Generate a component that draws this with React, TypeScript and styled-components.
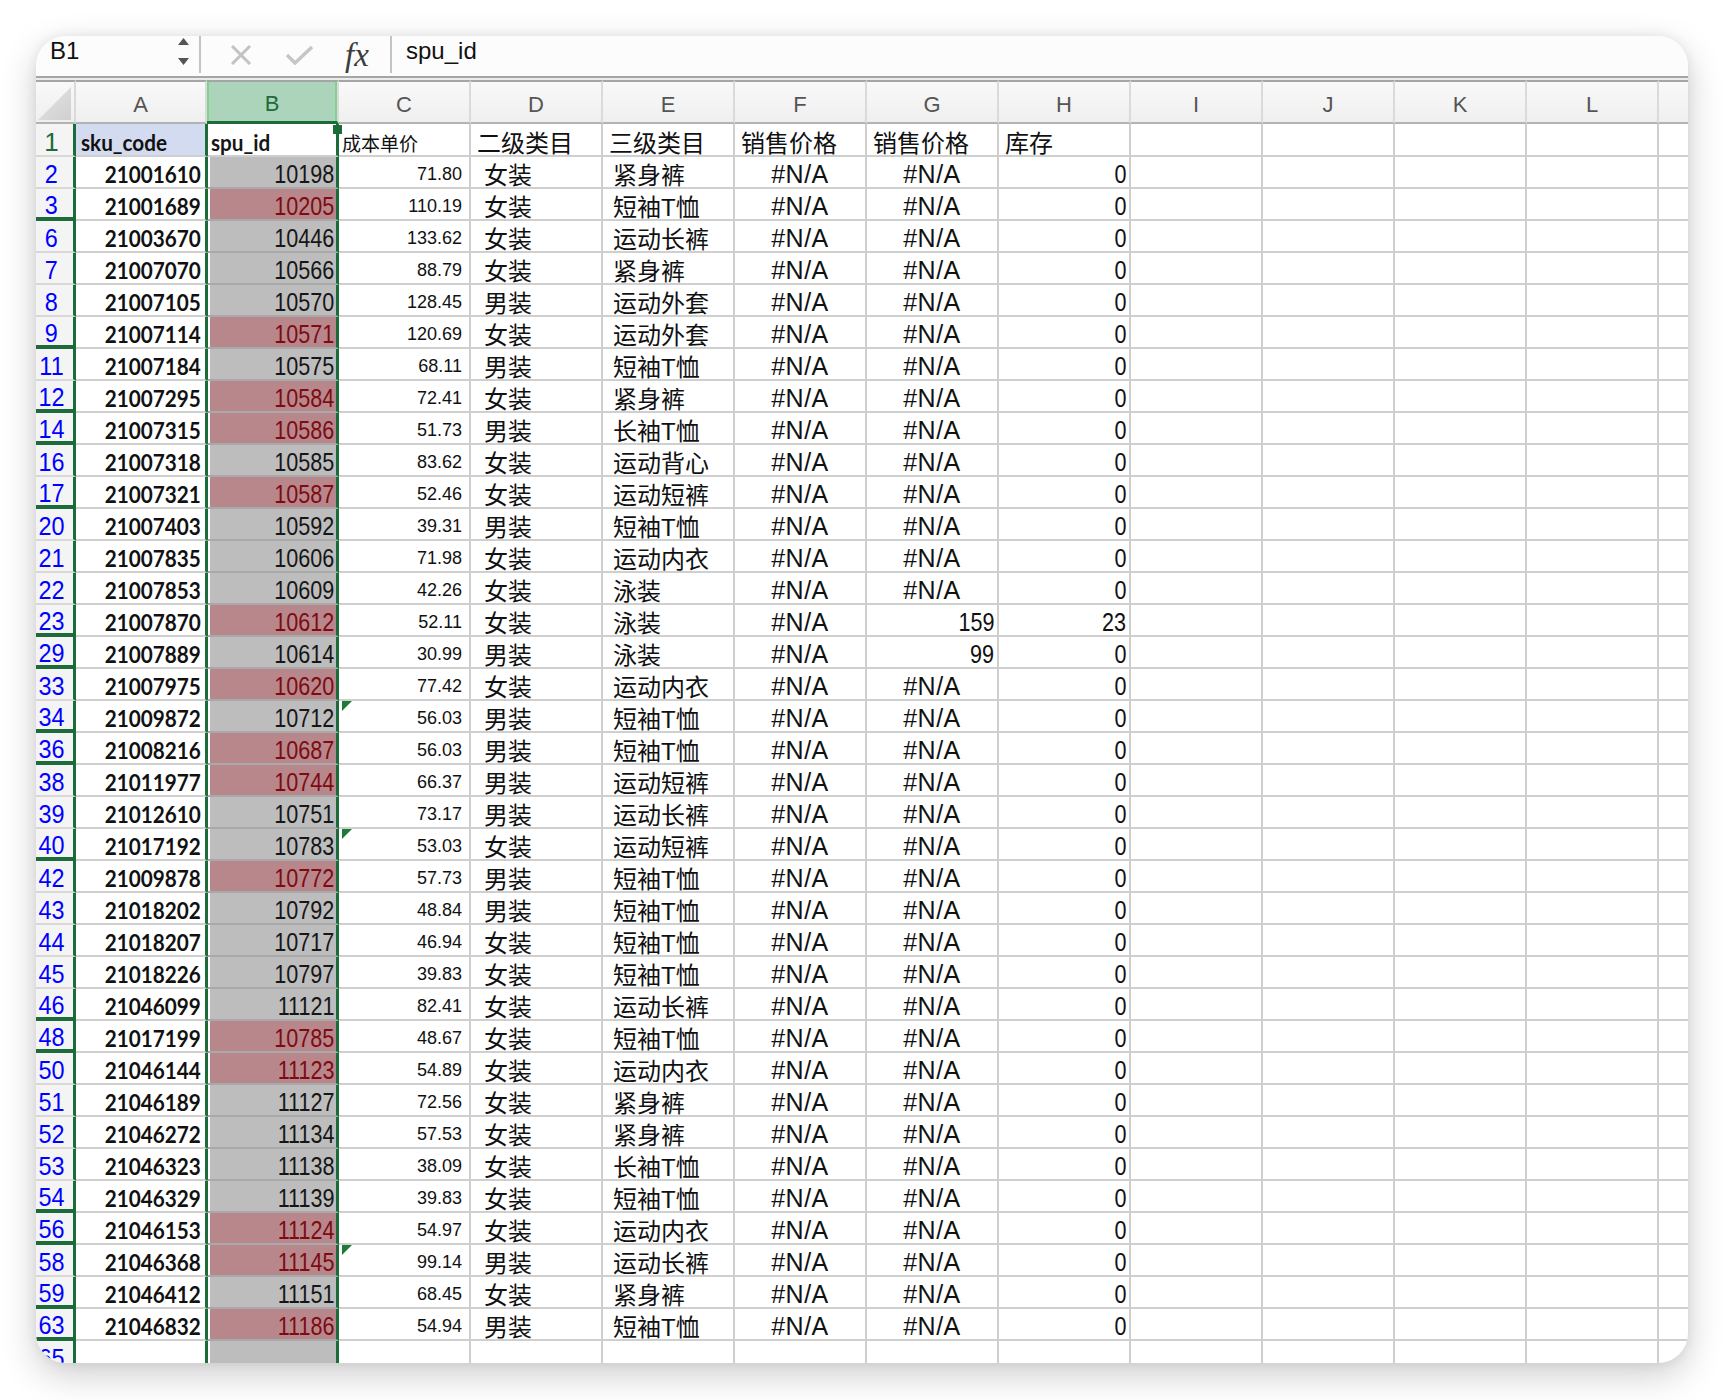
import React from "react";
import styled, { createGlobalStyle } from "styled-components";

const GREEN = "#1d6b3a";
const GRID = "#cfcfcf";
const LATIN = `"Liberation Sans", Arial, "Noto Sans CJK SC", sans-serif`;
const CJK = `"Liberation Sans", "Noto Sans CJK SC", sans-serif`;
const BOLD = `Lato, "Liberation Sans", sans-serif`;

const GlobalStyle = createGlobalStyle`
  * { box-sizing: border-box; }
  html, body { margin: 0; padding: 0; background: #fff; }
  body { font-family: ${LATIN}; }
`;

const Page = styled.div`
  width: 1724px;
  height: 1400px;
  padding: 36px 0 0 36px;
  background: #fff;
`;

const Window = styled.div`
  width: 1652px;
  height: 1327px;
  border-radius: 30px;
  overflow: hidden;
  background: #fff;
  box-shadow: 0 12px 36px rgba(0, 0, 0, 0.2), 0 0 12px rgba(0, 0, 0, 0.07);
  display: flex;
  flex-direction: column;
`;

const FormulaBar = styled.div`
  height: 42px;
  flex: none;
  display: flex;
  align-items: center;
  padding-bottom: 10px;
  background: #fcfcfc;
  border-bottom: 2px solid #a5a5a5;
  color: #111;
  font-size: 24px;
`;

const NameBox = styled.div`
  width: 141px;
  padding-left: 14px;
`;

const Spinner = styled.svg`
  width: 16px;
  height: 30px;
  align-self: flex-start;
  margin-top: 1px;
`;

const BarDivider = styled.div<{ $ml: number }>`
  width: 2px;
  height: 37px;
  align-self: flex-start;
  margin-left: ${(p) => p.$ml}px;
  background: #c4c4c4;
`;

const BarIcon = styled.svg<{ $ml: number }>`
  margin-left: ${(p) => p.$ml}px;
  margin-top: 8px;
  flex: none;
`;

const Fx = styled.span`
  margin-left: 31px;
  width: 30px;
  margin-top: 8px;
  font-family: "Liberation Serif", "DejaVu Serif", serif;
  font-style: italic;
  font-size: 33px;
  color: #3c3c3c;
`;

const FormulaText = styled.span`
  margin-left: 14px;
`;

const GapLine = styled.div`
  height: 2px;
  flex: none;
  background: #ececec;
`;

const Sheet = styled.div`
  display: grid;
  grid-template-columns: 40px 131px repeat(11, 132px) 1fr;
  grid-template-rows: 44px 33px;
  grid-auto-rows: 32px;
`;

/* Excel on the Mac draws its cell text tall and narrow */
const Squeeze = styled.span<{ $x: number; $origin?: string }>`
  display: inline-block;
  transform: scaleX(${(p) => p.$x});
  transform-origin: ${(p) => p.$origin ?? "right"} center;
`;

const HeadCell = styled.div<{ $sel?: boolean; $last?: boolean }>`
  display: flex;
  align-items: center;
  justify-content: center;
  padding-top: 5px;
  border-top: 2px solid #a5a5a5;
  border-bottom: ${(p) => (p.$sel ? `3px solid ${GREEN}` : "2px solid #b3b3b3")};
  border-right: ${(p) => (p.$last ? "none" : "2px solid #dadada")};
  background: ${(p) =>
    p.$sel ? "#acd4bb" : "linear-gradient(#f9f9f9, #efefef)"};
  box-shadow: ${(p) =>
    p.$sel ? "inset 2px 0 0 #7fd48a, inset -2px 0 0 #7fd48a" : "none"};
  color: ${(p) => (p.$sel ? GREEN : "#555")};
  font-size: 22px;
`;

const Corner = styled(HeadCell)`
  align-items: flex-end;
  justify-content: flex-end;
  padding: 0 3px 2px 0;
`;

const CornerMark = styled.span`
  width: 33px;
  height: 33px;
  clip-path: polygon(100% 0, 100% 100%, 0 100%);
  background: linear-gradient(135deg, #e6e6e6, #cfcfcf);
`;

const RowHead = styled.div<{ $first?: boolean; $gap?: boolean }>`
  display: flex;
  align-items: center;
  justify-content: center;
  padding: 5px 6px 0 0;
  background: #f4f4f4;
  border-right: 3px solid ${GREEN};
  border-bottom: ${(p) => (p.$gap ? `4px solid ${GREEN}` : "2px solid #d8d8d8")};
  color: ${(p) => (p.$first ? "#1e6b3a" : "#0000ff")};
  font-size: 26px;
  overflow: hidden;
`;

const Cell = styled.div<{ $align?: "left" | "right" | "center"; $pl?: number; $pr?: number; $last?: boolean }>`
  position: relative;
  display: flex;
  align-items: center;
  justify-content: ${(p) =>
    p.$align === "right" ? "flex-end" : p.$align === "center" ? "center" : "flex-start"};
  padding: 5px ${(p) => p.$pr ?? 0}px 0 ${(p) => p.$pl ?? 0}px;
  border-right: ${(p) => (p.$last ? "none" : `2px solid ${GRID}`)};
  border-bottom: 2px solid ${GRID};
  white-space: nowrap;
  color: #111;
  font-size: 22px;
`;

const SkuCell = styled(Cell)<{ $head?: boolean }>`
  padding-top: 4px;
  font-family: ${BOLD};
  font-weight: 700;
  font-size: 23px;
  background: ${(p) => (p.$head ? "#d3dbf0" : "#fff")};
  border-right-color: ${GREEN};
`;

const SpuCell = styled(Cell)<{ $tone: "head" | "plain" | "dup" }>`
  padding-top: 4px;
  border-left: 1px solid ${GREEN};
  border-right: 3px solid ${GREEN};
  border-bottom-color: ${(p) => (p.$tone === "head" ? GRID : "#a9a9a9")};
  box-shadow: inset 2px 0 0 #fff;
  background: ${(p) =>
    p.$tone === "head" ? "#fff" : p.$tone === "dup" ? "#b8878c" : "#bdbdbd"};
  color: ${(p) => (p.$tone === "dup" ? "#7e0b12" : "#161616")};
  font-family: ${(p) => (p.$tone === "head" ? BOLD : LATIN)};
  font-weight: ${(p) => (p.$tone === "head" ? 700 : 400)};
  font-size: ${(p) => (p.$tone === "head" ? 23 : 26)}px;
  z-index: 1;
`;

const FillHandle = styled.span`
  position: absolute;
  top: 1px;
  right: -6px;
  width: 9px;
  height: 9px;
  background: ${GREEN};
  z-index: 2;
`;

const CostCell = styled(Cell)<{ $head?: boolean }>`
  font-family: ${(p) => (p.$head ? CJK : LATIN)};
  font-size: ${(p) => (p.$head ? 19 : 18)}px;
`;

const ErrorMark = styled.span`
  position: absolute;
  top: 0;
  left: 3px;
  width: 10px;
  height: 10px;
  clip-path: polygon(0 0, 100% 0, 0 100%);
  background: #1e7b34;
`;

const CnCell = styled(Cell)`
  padding-top: 3px;
  font-family: ${CJK};
  font-size: 24px;
`;

const NaCell = styled(Cell)`
  font-size: 25px;
  letter-spacing: 0.5px;
`;

const NumCell = styled(Cell)`
  font-size: 26px;
`;

type RowData = {
  n: number;
  sku: string;
  spu: string;
  dup: boolean;
  cost: string;
  c2: string;
  c3: string;
};

const RAW = `2 21001610 10198 - 71.80 女装 紧身裤
3 21001689 10205 d 110.19 女装 短袖T恤
6 21003670 10446 - 133.62 女装 运动长裤
7 21007070 10566 - 88.79 女装 紧身裤
8 21007105 10570 - 128.45 男装 运动外套
9 21007114 10571 d 120.69 女装 运动外套
11 21007184 10575 - 68.11 男装 短袖T恤
12 21007295 10584 d 72.41 女装 紧身裤
14 21007315 10586 d 51.73 男装 长袖T恤
16 21007318 10585 - 83.62 女装 运动背心
17 21007321 10587 d 52.46 女装 运动短裤
20 21007403 10592 - 39.31 男装 短袖T恤
21 21007835 10606 - 71.98 女装 运动内衣
22 21007853 10609 - 42.26 女装 泳装
23 21007870 10612 d 52.11 女装 泳装
29 21007889 10614 - 30.99 男装 泳装
33 21007975 10620 d 77.42 女装 运动内衣
34 21009872 10712 - 56.03 男装 短袖T恤
36 21008216 10687 d 56.03 男装 短袖T恤
38 21011977 10744 d 66.37 男装 运动短裤
39 21012610 10751 - 73.17 男装 运动长裤
40 21017192 10783 - 53.03 女装 运动短裤
42 21009878 10772 d 57.73 男装 短袖T恤
43 21018202 10792 - 48.84 男装 短袖T恤
44 21018207 10717 - 46.94 女装 短袖T恤
45 21018226 10797 - 39.83 女装 短袖T恤
46 21046099 11121 - 82.41 女装 运动长裤
48 21017199 10785 d 48.67 女装 短袖T恤
50 21046144 11123 d 54.89 女装 运动内衣
51 21046189 11127 - 72.56 女装 紧身裤
52 21046272 11134 - 57.53 女装 紧身裤
53 21046323 11138 - 38.09 女装 长袖T恤
54 21046329 11139 - 39.83 女装 短袖T恤
56 21046153 11124 d 54.97 女装 运动内衣
58 21046368 11145 d 99.14 男装 运动长裤
59 21046412 11151 - 68.45 女装 紧身裤
63 21046832 11186 d 54.94 男装 短袖T恤`;

const rows: RowData[] = RAW.split("\n").map((line) => {
  const [n, sku, spu, d, cost, c2, c3] = line.trim().split(" ");
  return { n: Number(n), sku, spu, dup: d === "d", cost, c2, c3 };
});

const stock: Record<number, [string, string]> = {
  23: ["159", "23"],
  29: ["99", "0"],
};

const errorRows = new Set([34, 40, 58]);

const LETTERS = ["A", "B", "C", "D", "E", "F", "G", "H", "I", "J", "K", "L"];

const Blanks = () => (
  <>
    <Cell />
    <Cell />
    <Cell />
    <Cell />
    <Cell $last />
  </>
);

export default function App() {
  return (
    <Page>
      <GlobalStyle />
      <Window>
        <FormulaBar>
          <NameBox>B1</NameBox>
          <Spinner viewBox="0 0 16 30">
            <polygon points="1,8 6.5,1 12,8" fill="#555" />
            <polygon points="1,21 6.5,28 12,21" fill="#555" />
          </Spinner>
          <BarDivider $ml={6} />
          <BarIcon $ml={29} width="22" height="20" viewBox="0 0 22 20">
            <path d="M2 1 L20 19 M20 1 L2 19" stroke="#c3c3c3" strokeWidth="3" />
          </BarIcon>
          <BarIcon $ml={33} width="29" height="20" viewBox="0 0 29 20">
            <polyline points="2,10 10,18 27,2" fill="none" stroke="#c6c6c6" strokeWidth="3.5" />
          </BarIcon>
          <Fx>fx</Fx>
          <BarDivider $ml={15} />
          <FormulaText>spu_id</FormulaText>
        </FormulaBar>
        <GapLine />
        <Sheet>
          <Corner>
            <CornerMark />
          </Corner>
          {LETTERS.map((l) => (
            <HeadCell key={l} $sel={l === "B"}>
              {l}
            </HeadCell>
          ))}
          <HeadCell $last />

          <RowHead $first>1</RowHead>
          <SkuCell $head $pl={5}>
            <Squeeze $x={0.9} $origin="left">sku_code</Squeeze>
          </SkuCell>
          <SpuCell $tone="head" $pl={3}>
            <Squeeze $x={0.9} $origin="left">spu_id</Squeeze>
            <FillHandle />
          </SpuCell>
          <CostCell $head $pl={3}>成本单价</CostCell>
          <CnCell $pl={6}>二级类目</CnCell>
          <CnCell $pl={6}>三级类目</CnCell>
          <CnCell $pl={6}>销售价格</CnCell>
          <CnCell $pl={6}>销售价格</CnCell>
          <CnCell $pl={6}>库存</CnCell>
          <Blanks />

          {rows.map((r, i) => {
            const next = rows[i + 1]?.n ?? 65;
            const [g, h] = stock[r.n] ?? ["#N/A", "0"];
            return (
              <React.Fragment key={r.n}>
                <RowHead $gap={next - r.n > 1}>
                  <Squeeze $x={0.9} $origin="center">{r.n}</Squeeze>
                </RowHead>
                <SkuCell $align="right" $pr={4}>
                  <Squeeze $x={0.9}>{r.sku}</Squeeze>
                </SkuCell>
                <SpuCell $tone={r.dup ? "dup" : "plain"} $align="right" $pr={2}>
                  <Squeeze $x={0.83}>{r.spu}</Squeeze>
                </SpuCell>
                <CostCell $align="right" $pr={7}>
                  {errorRows.has(r.n) && <ErrorMark />}
                  {r.cost}
                </CostCell>
                <CnCell $pl={13}>{r.c2}</CnCell>
                <CnCell $pl={10}>{r.c3}</CnCell>
                <NaCell $align="center">#N/A</NaCell>
                {g === "#N/A" ? (
                  <NaCell $align="center">#N/A</NaCell>
                ) : (
                  <NumCell $align="right" $pr={3}>
                    <Squeeze $x={0.83}>{g}</Squeeze>
                  </NumCell>
                )}
                <NumCell $align="right" $pr={3}>
                  <Squeeze $x={0.83}>{h}</Squeeze>
                </NumCell>
                <Blanks />
              </React.Fragment>
            );
          })}

          <RowHead>
            <Squeeze $x={0.9} $origin="center">65</Squeeze>
          </RowHead>
          <SkuCell />
          <SpuCell $tone="plain" />
          <Cell />
          <Cell />
          <Cell />
          <Cell />
          <Cell />
          <Cell />
          <Blanks />
        </Sheet>
      </Window>
    </Page>
  );
}
